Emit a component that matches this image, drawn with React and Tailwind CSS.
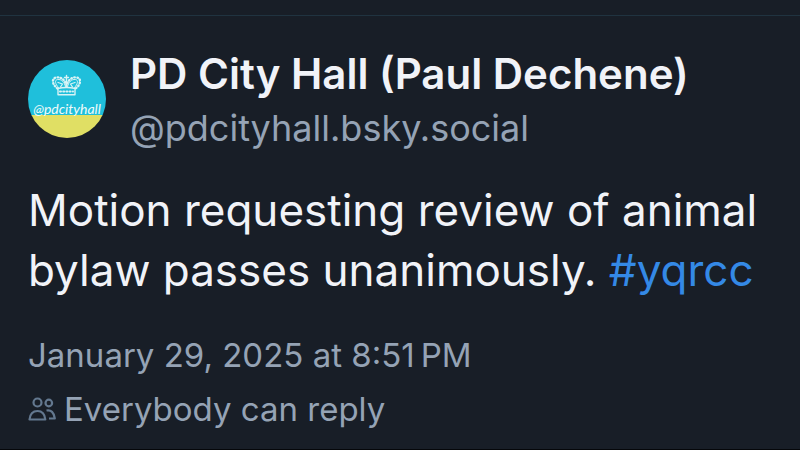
function Avatar() {
  return (
    <svg viewBox="0 0 78 78" className="mt-3 size-[78px] shrink-0" role="img" aria-label="@pdcityhall avatar">
      <defs>
        <clipPath id="disc">
          <circle cx="39" cy="39" r="39" />
        </clipPath>
      </defs>
      <g clipPath="url(#disc)">
        <rect width="78" height="56" fill="#1fbfdb" />
        <rect y="55" width="78" height="23" fill="#e0df64" />
      </g>
      <g fill="none" stroke="#d8f3f5" strokeLinecap="round" strokeLinejoin="round">
        <path d="M29.500 28.500C24 24.500 23.500 18.500 28 17.500C33 16.500 37 20 38.500 25.500C40 20 44 16.500 49 17.500C53.500 18.500 53 24.500 47.500 28.500" strokeWidth="2.400" strokeDasharray="0.600 2.500" />
        <path d="M30.500 27.500C27 24 26.500 20 29.500 19.500C33.500 19 36.500 22 37.500 27M46.500 27.500C50 24 50.500 20 47.500 19.500C43.500 19 40.500 22 39.500 27" strokeWidth="1" />
        <path d="M30 22.500L34.500 24L32.500 27M47 22.500L42.500 24L44.500 27" strokeWidth="1.300" />
        <path d="M38.500 15.500V20M36.500 17.500H40.500M38.500 20V27" strokeWidth="1.400" />
        <path d="M29.500 28.500Q38.500 26.500 47.500 28.500M30 34.800H47M30 28.500V34.500M47 28.500V34.500" strokeWidth="1.400" />
        <path d="M32 31.500H45" strokeWidth="2" strokeDasharray="1 2.200" />
      </g>
      <text
        x="39"
        y="54"
        textAnchor="middle"
        className="fill-[#effbfa] font-['Lato','Open_Sans',sans-serif] text-[14px] italic"
      >
        @pdcityhall
      </text>
    </svg>
  );
}

function PeopleIcon() {
  return (
    <svg viewBox="0 0 28 24" className="h-6 w-7 shrink-0" fill="none" stroke="#63788f" strokeWidth="2.200" strokeLinejoin="round" aria-hidden="true">
      <circle cx="9.500" cy="5.500" r="4" />
      <circle cx="20.800" cy="6" r="3.300" />
      <path d="M1.500 22.500C2 17 5 14 9.500 14S16.800 17 17.300 22.500Z" />
      <path d="M18.500 13.500C23 12.500 26 15.500 26.800 21.500H21" />
    </svg>
  );
}

export default function App() {
  return (
    <div className="flex min-h-screen flex-col border-b border-[#05070a] bg-[#181e27] font-['Inter','Liberation_Sans',sans-serif]">
      <hr className="mt-[15px] border-t border-[#203340]" />
      <article className="px-7 pt-8">
        <header className="flex items-start gap-6">
          <Avatar />
          <div className="min-w-0 whitespace-nowrap">
            <h1 className="text-[42px] leading-[52px] font-semibold text-[#f1f3f8]">
              PD City Hall (Paul Dechene)
            </h1>
            <p className="text-[36px] leading-[56px] text-[#95a3b5]">@pdcityhall.bsky.social</p>
          </div>
        </header>
        <p className="mt-6 text-[44px] leading-[60px] text-[#f1f3f8]">
          Motion requesting review of animal bylaw passes unanimously.{" "}
          <a href="#yqrcc" className="text-[#3489e6]">#yqrcc</a>
        </p>
        <footer className="mt-7 text-[33px] leading-[54px] text-[#95a3b5]">
          <time dateTime="2025-01-29T20:51" className="block">January 29, 2025 at 8:51{"\u202f"}PM</time>
          <button type="button" className="flex items-baseline gap-2">
            <PeopleIcon />
            Everybody can reply
          </button>
        </footer>
      </article>
    </div>
  );
}
